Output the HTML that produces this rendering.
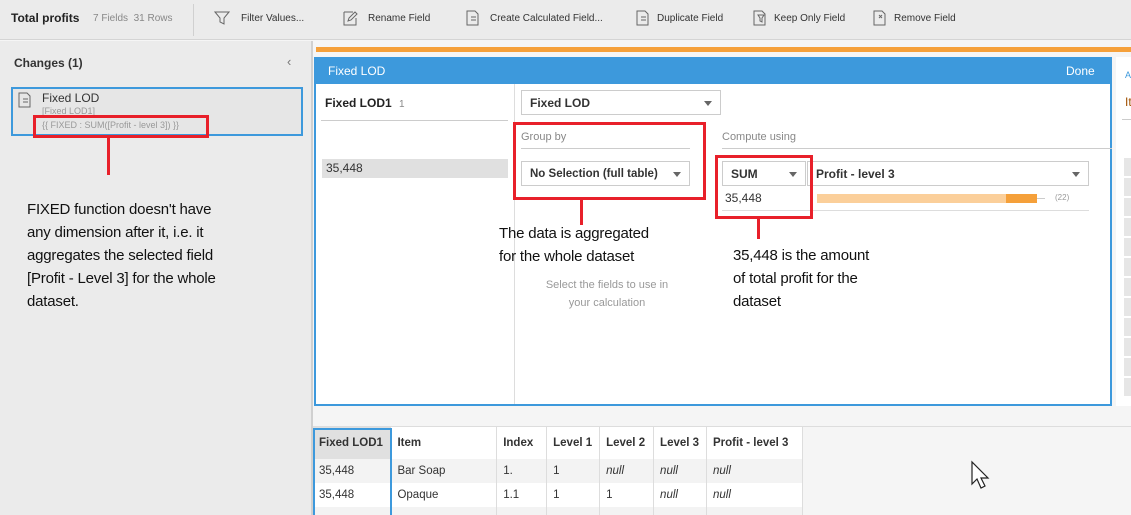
<!DOCTYPE html>
<html><head><meta charset="utf-8"><style>
*{margin:0;padding:0;box-sizing:border-box}
html,body{width:1131px;height:515px;overflow:hidden}
body{background:#f5f5f5;font-family:"Liberation Sans",sans-serif;position:relative;color:#333}
.a{position:absolute}
.tb{font-size:10px;color:#333}
.ann{font-family:"Liberation Sans",sans-serif;font-size:15px;line-height:23px;color:#111;white-space:nowrap;letter-spacing:-0.2px}
.red{border:3px solid #e8202a}
.dd{position:absolute;background:#fff;border:1px solid #ccc;font-size:12px;font-weight:bold;padding-left:8px;line-height:24px;color:#333}
.dd:after{content:"";position:absolute;right:8px;top:10px;border-left:4px solid transparent;border-right:4px solid transparent;border-top:5px solid #666}
table{border-collapse:collapse;font-size:12px}
td{border-right:1px solid #ddd;height:24px;padding-left:6px;vertical-align:middle;white-space:nowrap}
</style></head><body>
<div class="a" style="left:0;top:0;width:1131px;height:40px;background:#ebebeb;border-bottom:1px solid #d4d4d4"></div>
<div class="a" style="left:11px;top:11px;font-size:12px;font-weight:bold;color:#222">Total profits</div>
<div class="a tb" style="left:93px;top:13px;color:#888;font-size:10px">7 Fields&nbsp; 31 Rows</div>
<div class="a" style="left:193px;top:4px;width:1px;height:32px;background:#d0d0d0"></div>
<svg class="a" style="left:214px;top:10px" width="16" height="16"><path d="M1 2h14l-5 6v6l-4-2v-4z" fill="none" stroke="#666"/></svg>
<div class="a tb" style="left:241px;top:13px">Filter Values...</div>
<svg class="a" style="left:342px;top:10px" width="16" height="16"><path d="M2 2h9M2 2v13h12V8M6 11l1-3 6-6 2 2-6 6z" fill="none" stroke="#666"/></svg>
<div class="a tb" style="left:368px;top:13px">Rename Field</div>
<svg class="a" style="left:465px;top:10px" width="16" height="16"><path d="M2 1h8l3 3v11H2zM6 7h5M6 10h5" fill="none" stroke="#666"/></svg>
<div class="a tb" style="left:490px;top:13px">Create Calculated Field...</div>
<svg class="a" style="left:635px;top:10px" width="16" height="16"><path d="M2 1h8l3 3v11H2zM6 7h5M6 10h5" fill="none" stroke="#666"/></svg>
<div class="a tb" style="left:657px;top:13px">Duplicate Field</div>
<svg class="a" style="left:752px;top:10px" width="16" height="16"><path d="M2 1h8l3 3v11H2zM6 5h6l-2 3v4l-2-1V8z" fill="none" stroke="#666"/></svg>
<div class="a tb" style="left:774px;top:13px">Keep Only Field</div>
<svg class="a" style="left:872px;top:10px" width="16" height="16"><path d="M2 1h8l3 3v11H2zM7 5l3 3M10 5l-3 3" fill="none" stroke="#666"/></svg>
<div class="a tb" style="left:894px;top:13px">Remove Field</div>
<div class="a" style="left:0;top:41px;width:313px;height:474px;background:#ebebeb;border-right:2px solid #d0d0d0"></div>
<div class="a" style="left:14px;top:56px;font-size:12px;font-weight:bold;color:#333">Changes (1)</div>
<div class="a" style="left:287px;top:54px;font-size:13px;color:#777">‹</div>
<div class="a" style="left:11px;top:87px;width:292px;height:49px;border:2px solid #3d99dc;background:#e6e6e6"></div>
<svg class="a" style="left:18px;top:92px" width="14" height="16"><path d="M1 1h8l3 3v11H1zM5 7h5M5 10h5" fill="none" stroke="#666"/></svg>
<div class="a" style="left:42px;top:91px;font-size:12px;color:#333">Fixed LOD</div>
<div class="a" style="left:42px;top:106px;font-size:9px;color:#999">[Fixed LOD1]</div>
<div class="a red" style="left:33px;top:115px;width:176px;height:23px"></div>
<div class="a" style="left:42px;top:120px;font-size:9px;color:#999">{{ FIXED : SUM([Profit - level 3]) }}</div>
<div class="a" style="left:107px;top:138px;width:3px;height:37px;background:#e8202a"></div>
<div class="a ann" style="left:27px;top:198px">FIXED function doesn't have<br>any dimension after it, i.e. it<br>aggregates the selected field<br>[Profit - Level 3] for the whole<br>dataset.</div>
<div class="a" style="left:316px;top:47px;width:815px;height:5px;background:#f5a03a"></div>
<div class="a" style="left:314px;top:57px;width:798px;height:349px;border:2px solid #3d99dc;background:#fff"></div>
<div class="a" style="left:314px;top:57px;width:798px;height:27px;background:#3d99dc"></div>
<div class="a" style="left:328px;top:64px;font-size:12px;color:#fff">Fixed LOD</div>
<div class="a" style="left:1066px;top:64px;font-size:12px;color:#fff">Done</div>
<div class="a" style="left:514px;top:84px;width:1px;height:320px;background:#ddd"></div>
<div class="a" style="left:325px;top:96px;font-size:12px;font-weight:bold;color:#222">Fixed LOD1 <span style="font-weight:normal;color:#888;font-size:10px;margin-left:4px">1</span></div>
<div class="a" style="left:321px;top:120px;width:187px;height:1px;background:#ccc"></div>
<div class="a" style="left:322px;top:159px;width:186px;height:19px;background:#e0e0e0;font-size:12px;line-height:19px;padding-left:4px;color:#333">35,448</div>
<div class="dd" style="left:521px;top:90px;width:200px;height:25px">Fixed LOD</div>
<div class="a" style="left:521px;top:131px;font-size:11px;color:#888">Group by</div>
<div class="a" style="left:521px;top:148px;width:169px;height:1px;background:#ccc"></div>
<div class="dd" style="left:521px;top:161px;width:169px;height:25px;font-size:11.5px">No Selection (full table)</div>
<div class="a red" style="left:513px;top:122px;width:193px;height:78px"></div>
<div class="a" style="left:580px;top:200px;width:3px;height:25px;background:#e8202a"></div>
<div class="a ann" style="left:499px;top:222px">The data is aggregated<br>for the whole dataset</div>
<div class="a" style="left:520px;top:276px;width:174px;text-align:center;font-size:11px;line-height:18px;color:#999">Select the fields to use in<br>your calculation</div>
<div class="a" style="left:722px;top:131px;font-size:11px;color:#888">Compute using</div>
<div class="a" style="left:722px;top:148px;width:390px;height:1px;background:#ccc"></div>
<div class="dd" style="left:722px;top:161px;width:84px;height:25px">SUM</div>
<div class="dd" style="left:807px;top:161px;width:282px;height:25px">Profit - level 3</div>
<div class="a" style="left:725px;top:191px;font-size:12px;color:#333">35,448</div>
<div class="a" style="left:817px;top:194px;width:220px;height:9px;background:#fbcf9a"></div>
<div class="a" style="left:1006px;top:194px;width:31px;height:9px;background:#f5a03a"></div>
<div class="a" style="left:1037px;top:198px;width:8px;height:1px;background:#ccc"></div>
<div class="a" style="left:1055px;top:193px;font-size:8px;color:#999">(22)</div>
<div class="a" style="left:722px;top:210px;width:367px;height:1px;background:#ddd"></div>
<div class="a red" style="left:715px;top:155px;width:98px;height:64px"></div>
<div class="a" style="left:757px;top:219px;width:3px;height:20px;background:#e8202a"></div>
<div class="a ann" style="left:733px;top:244px">35,448 is the amount<br>of total profit for the<br>dataset</div>
<div class="a" style="left:1116px;top:57px;width:15px;height:349px;background:#fff"></div>
<div class="a" style="left:1125px;top:70px;font-size:9px;color:#3d99dc">A</div>
<div class="a" style="left:1125px;top:95px;font-size:12px;color:#a05000">It</div>
<div class="a" style="left:1122px;top:119px;width:9px;height:1px;background:#ccc"></div>
<div class="a" style="left:1124px;top:158px;width:7px;height:240px;background:repeating-linear-gradient(#e6e6e6 0 18px,#fff 18px 20px)"></div>
<div class="a" style="left:313px;top:426px;width:818px;height:1px;background:#ddd"></div>
<div class="a" style="left:313px;top:427px;width:490px;height:88px;background:#fff;overflow:hidden">
<table style="position:absolute;left:0;top:0;font-size:11.5px">
<tr style="font-weight:bold;height:32px"><td style="width:78px;background:#e0e0e0">Fixed LOD1</td><td style="width:106px">Item</td><td style="width:50px">Index</td><td style="width:53px">Level 1</td><td style="width:54px">Level 2</td><td style="width:53px">Level 3</td><td style="width:96px">Profit - level 3</td></tr>
<tr style="background:#f3f3f3"><td>35,448</td><td>Bar Soap</td><td>1.</td><td>1</td><td><i>null</i></td><td><i>null</i></td><td><i>null</i></td></tr>
<tr><td>35,448</td><td>Opaque</td><td>1.1</td><td>1</td><td>1</td><td><i>null</i></td><td><i>null</i></td></tr>
<tr style="background:#f3f3f3"><td></td><td></td><td></td><td></td><td></td><td></td><td></td></tr>
</table></div>
<div class="a" style="left:313px;top:428px;width:79px;height:87px;border:2px solid #3d99dc;border-bottom:none"></div>
<svg class="a" style="left:970px;top:460px" width="22" height="32"><path d="M2 2v22l5-5 4 9 4-2-4-8h7z" fill="#fff" stroke="#222" stroke-width="1.2"/></svg>
</body></html>
